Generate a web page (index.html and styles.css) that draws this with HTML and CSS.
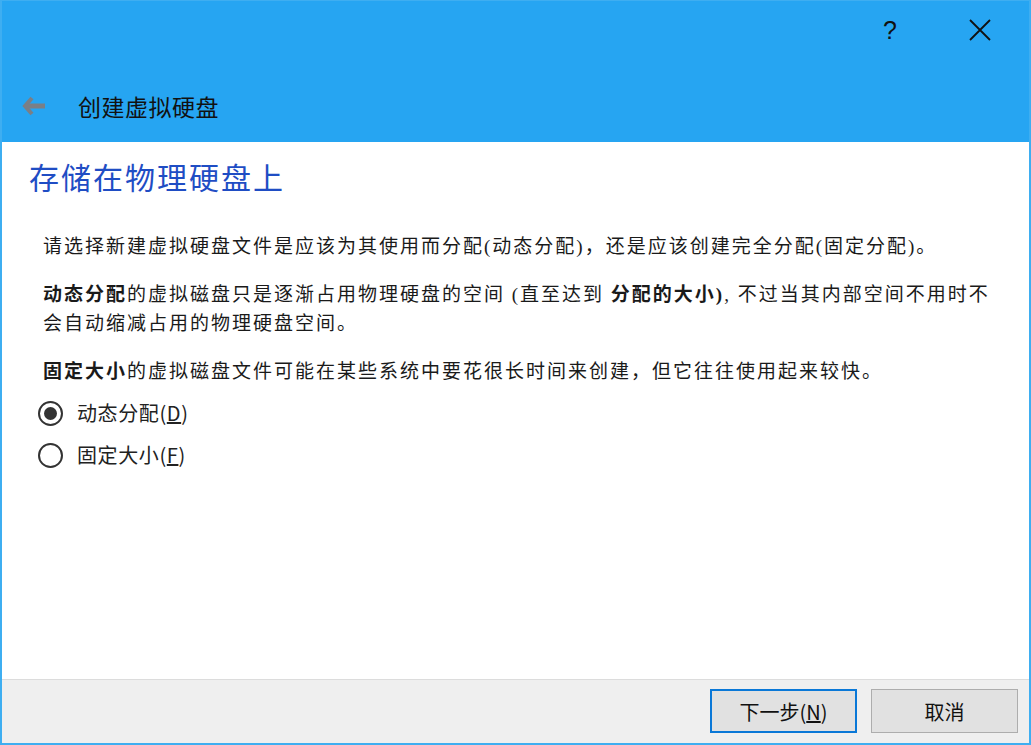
FILE: index.html
```html
<!DOCTYPE html>
<html lang="zh-CN">
<head>
<meta charset="utf-8">
<title>创建虚拟硬盘</title>
<link rel="stylesheet" href="styles.css">
</head>
<body>
<div class="window">
  <header class="header">
    <div class="titlebar">
      <span class="tb-btn help">?</span>
      <span class="tb-btn close">
        <svg width="22" height="22" viewBox="0 0 22 22"><path d="M1 1 L21 21 M21 1 L1 21" stroke="#111" stroke-width="1.8" fill="none"/></svg>
      </span>
    </div>
    <div class="wizard-title">
      <svg class="back" width="24" height="20" viewBox="0 0 24 20"><path d="M10 2 L3 10 L10 18" stroke="#7a7f86" stroke-width="4" fill="none" stroke-linejoin="miter"/><path d="M4 10 H23" stroke="#7a7f86" stroke-width="5"/></svg>
      <span class="wizard-name">创建虚拟硬盘</span>
    </div>
  </header>
  <main class="content">
    <h1 class="page-title">存储在物理硬盘上</h1>
    <div class="body-text">
      <p>请选择新建虚拟硬盘文件是应该为其使用而分配(动态分配)，还是应该创建完全分配(固定分配)。</p>
      <p><b>动态分配</b>的虚拟磁盘只是逐渐占用物理硬盘的空间 (直至达到 <b>分配的大小)</b>, 不过当其内部空间不用时不会自动缩减占用的物理硬盘空间。</p>
      <p><b>固定大小</b>的虚拟磁盘文件可能在某些系统中要花很长时间来创建，但它往往使用起来较快。</p>
    </div>
    <div class="options">
      <label class="radio"><span class="circle checked"></span><span>动态分配(<u>D</u>)</span></label>
      <label class="radio"><span class="circle"></span><span>固定大小(<u>F</u>)</span></label>
    </div>
  </main>
  <footer class="footer">
    <button class="btn primary">下一步(<u>N</u>)</button>
    <button class="btn">取消</button>
  </footer>
</div>
</body>
</html>
```
FILE: styles.css
```css
* { box-sizing: border-box; }
html, body { margin: 0; padding: 0; background: #fff; }
.window {
  width: 1031px;
  height: 745px;
  border: 2px solid #3eaef1;
  border-top-width: 1px;
  display: flex;
  flex-direction: column;
  font-family: "Noto Sans CJK SC", "Noto Sans", sans-serif;
  color: #1a1a1a;
}
.header {
  background: #26a5f2;
  height: 141px;
  display: flex;
  flex-direction: column;
}
.titlebar {
  height: 58px;
  flex: none;
  display: flex;
  justify-content: flex-end;
  align-items: center;
  padding-right: 38px;
  gap: 72px;
}
.tb-btn { display: flex; align-items: center; color: #111; }
.help { font-family: "Liberation Sans", sans-serif; font-size: 25px; }
.wizard-title {
  flex: 1;
  display: flex;
  align-items: center;
  padding-left: 20px;
  padding-top: 11px;
}
.back { margin-right: 32px; }
.wizard-name { font-size: 23px; color: #111; letter-spacing: 0.5px; }
.content {
  flex: 1;
  background: #fff;
  padding: 14px 20px 0 27px;
}
.page-title {
  margin: 0;
  font-weight: normal;
  font-size: 30px;
  line-height: 40px;
  letter-spacing: 2px;
  color: #1f4dc4;
}
.body-text {
  padding: 36px 0 0 14px;
  width: 975px;
  font-family: "Liberation Serif", "Noto Sans CJK SC", serif;
  font-size: 19px;
  line-height: 29px;
  letter-spacing: 2px;
  color: #1a1a1a;
}
.body-text p { margin: 0 0 19px; }
.options {
  display: flex;
  flex-direction: column;
  gap: 16px;
  padding-left: 9px;
  margin-top: -5px;
}
.radio {
  display: flex;
  align-items: center;
  gap: 14px;
  font-size: 20px;
  line-height: 26px;
  color: #222;
  letter-spacing: 0.6px;
}
.circle {
  width: 25px;
  height: 25px;
  border: 2px solid #333;
  border-radius: 50%;
  display: flex;
  align-items: center;
  justify-content: center;
}
.circle.checked::after {
  content: "";
  width: 13px;
  height: 13px;
  border-radius: 50%;
  background: #333;
}
.footer {
  height: 64px;
  flex: none;
  background: #efefef;
  border-top: 1px solid #dcdcdc;
  display: flex;
  justify-content: flex-end;
  align-items: flex-start;
  padding: 9px 11px 0 0;
  gap: 14px;
}
.btn {
  width: 147px;
  height: 44px;
  background: #e1e1e1;
  border: 1px solid #adadad;
  font-family: "Noto Sans CJK SC", sans-serif;
  font-size: 20px;
  color: #111;
  padding: 0;
}
.btn.primary { border: 2px solid #0a78d7; }
```
